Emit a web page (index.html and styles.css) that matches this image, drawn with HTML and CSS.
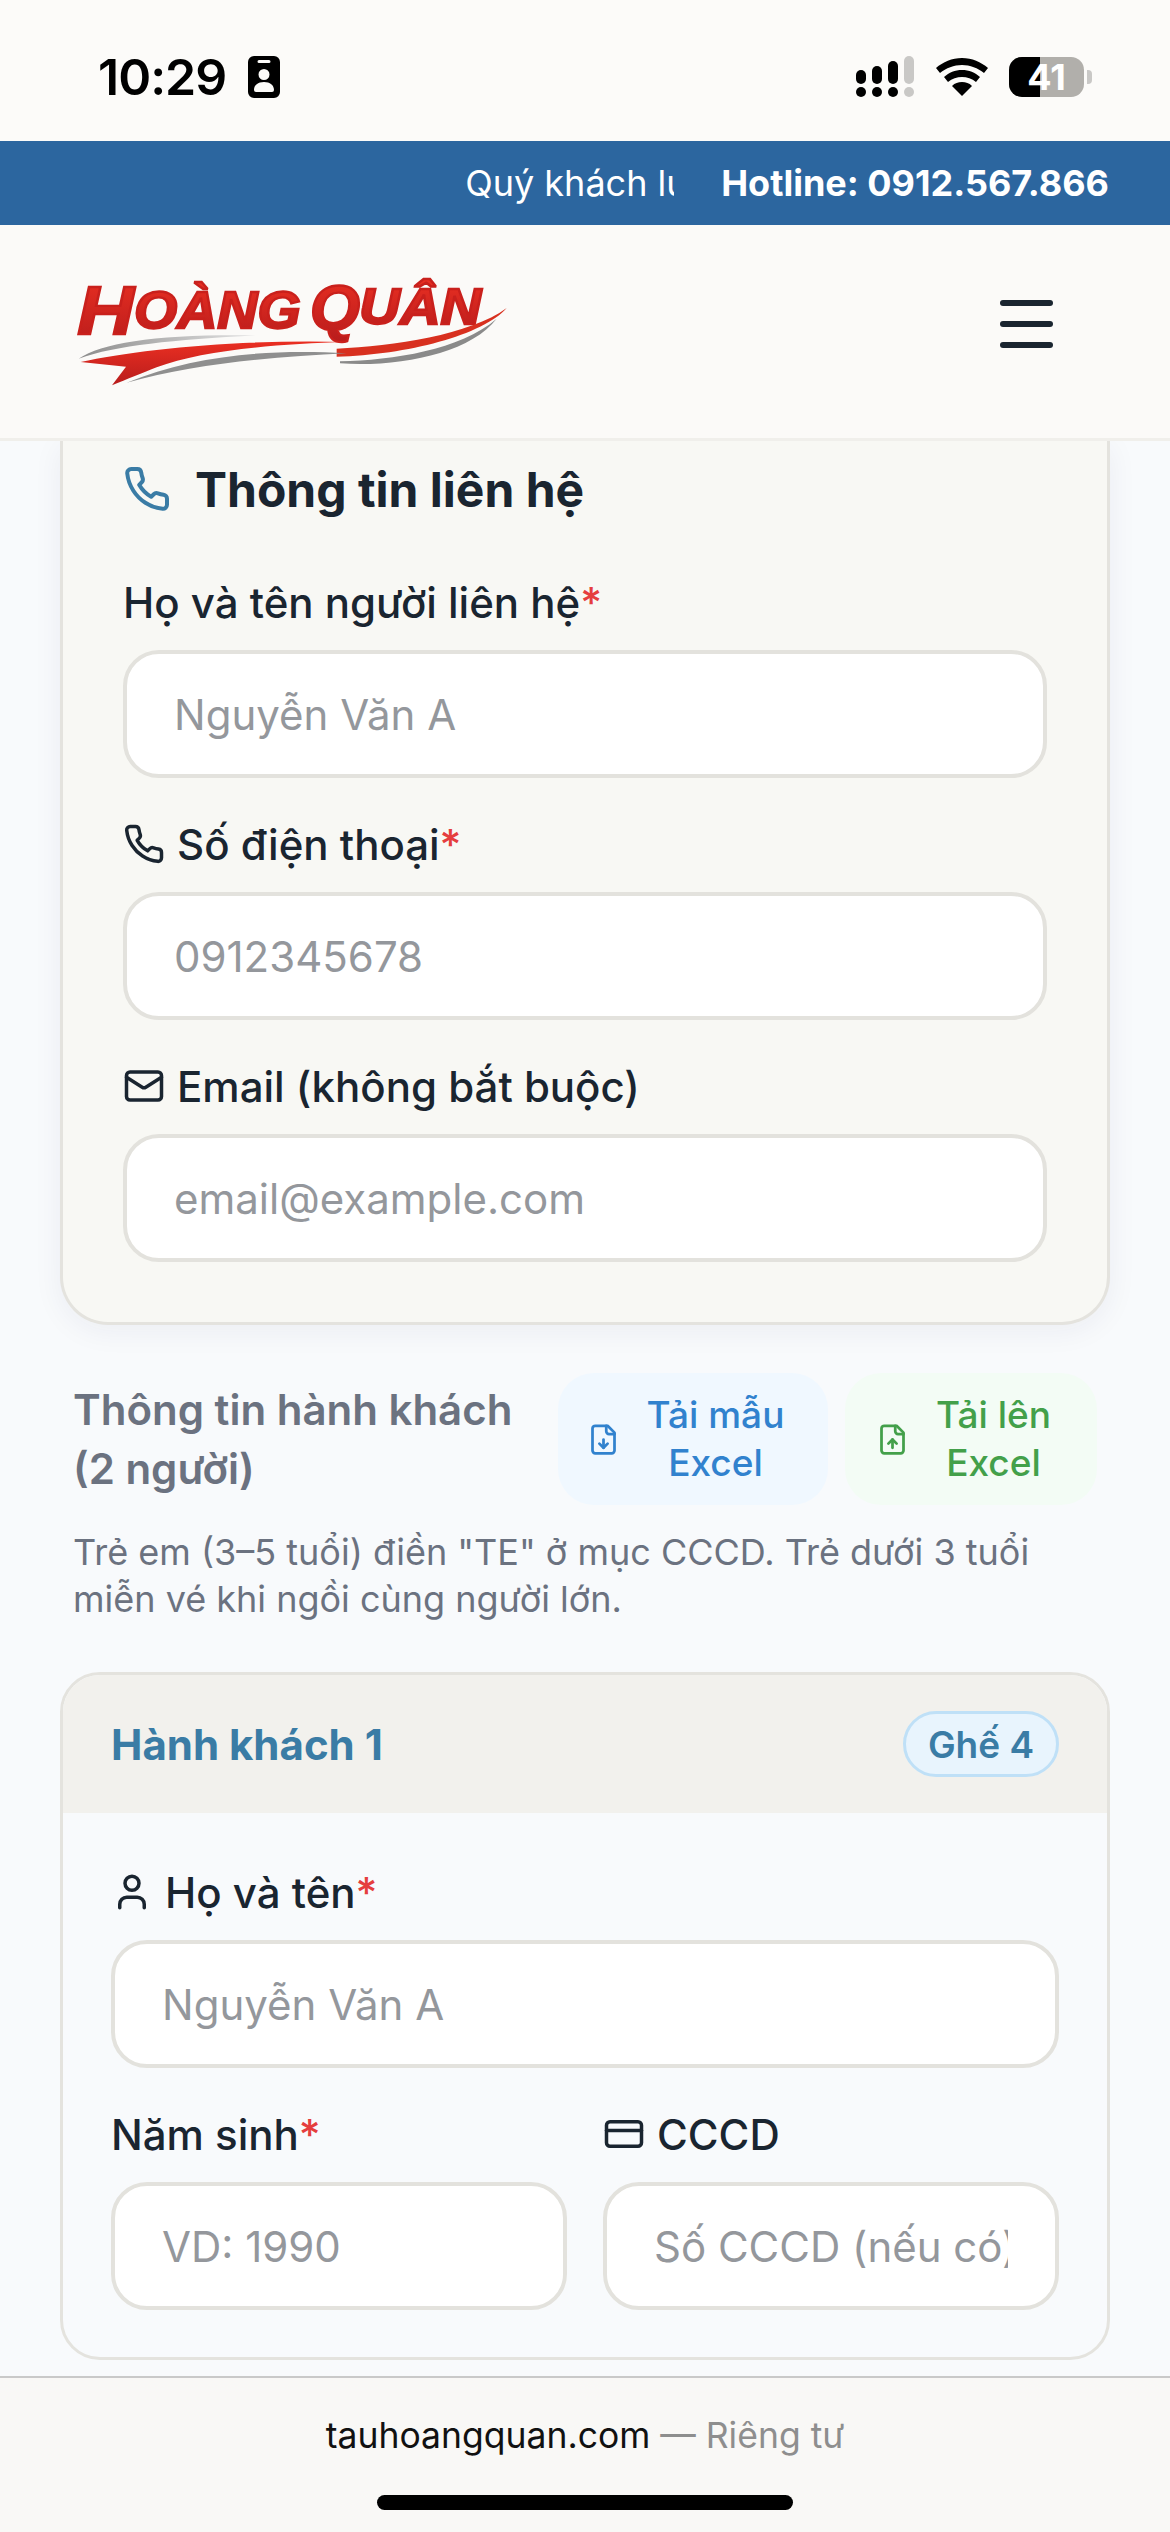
FILE: index.html
```html
<!DOCTYPE html>
<html lang="vi">
<head>
    <meta charset="UTF-8">
    <meta name="viewport" content="width=device-width, initial-scale=1.0">
    <title>Tàu Hoàng Quân</title>
    <link rel="stylesheet" href="styles.css">
</head>
<body>
    <div class="statusbar">
        <div class="status-left">
            <span class="status-time">10:29</span>
            <svg class="status-id" viewBox="0 0 32 42">
                <path fill="#000" fill-rule="evenodd" d="M6 0h20a6 6 0 0 1 6 6v30a6 6 0 0 1-6 6H6a6 6 0 0 1-6-6V6a6 6 0 0 1 6-6zM11 4a1 1 0 0 0 0 3h10a1 1 0 0 0 0-3zM16 13a5.5 5.5 0 1 0 0 11 5.5 5.5 0 0 0 0-11zM16 26c-6 0-10 3-10 8a2 2 0 0 0 2 2h16a2 2 0 0 0 2-2c0-5-4-8-10-8z"/>
            </svg>
        </div>
        <div class="status-right">
            <svg class="status-signal" viewBox="0 0 58 42">
                <rect x="0" y="14" width="10" height="14" rx="5"/>
                <rect x="16" y="10" width="10" height="18" rx="5"/>
                <rect x="32" y="5" width="10" height="23" rx="5"/>
                <rect x="48" y="0" width="10" height="28" rx="5" fill="#c9c8c6"/>
                <rect x="0" y="31" width="10" height="10" rx="5"/>
                <rect x="16" y="31" width="10" height="10" rx="5"/>
                <rect x="32" y="31" width="10" height="10" rx="5"/>
                <rect x="48" y="31" width="10" height="10" rx="5" fill="#c9c8c6"/>
            </svg>
            <svg class="status-wifi" viewBox="0 0 52 38">
                <path fill="#000" d="M26 0c10 0 19 4 26 10l-4 5C42 10 34 7 26 7S10 10 4 15L0 10C7 4 16 0 26 0z"/>
                <path fill="#000" d="M26 12c7 0 13 2.500 18 7l-4 5c-4-3.500-9-5-14-5s-10 1.500-14 5l-4-5c5-4.500 11-7 18-7z"/>
                <path fill="#000" d="M26 24c4 0 7 1 10 4L26 38 16 28c3-3 6-4 10-4z"/>
            </svg>
            <div class="battery">
                <div class="battery-level"></div>
                <span class="battery-text">41</span>
            </div>
            <div class="battery-nub"></div>
        </div>
    </div>

    <div class="topbar">
        <div class="topbar-marquee"><span>Quý khách lưu ý</span></div>
        <div class="topbar-hotline">Hotline: 0912.567.866</div>
    </div>

    <header class="site-header">
        <svg class="logo" viewBox="0 0 1380 390">
            <defs>
                <linearGradient id="logoRed" x1="0" y1="0" x2="0" y2="1">
                    <stop offset="0" stop-color="#ea2f22"/>
                    <stop offset="1" stop-color="#b81c1c"/>
                </linearGradient>
                <linearGradient id="logoGrey" x1="0" y1="0" x2="1" y2="0">
                    <stop offset="0" stop-color="#8c8c8c"/>
                    <stop offset="1" stop-color="#e4e4e4"/>
                </linearGradient>
            </defs>
            <text class="logo-text" x="52" y="222" font-size="205" textLength="170" lengthAdjust="spacingAndGlyphs">H</text>
            <text class="logo-text" x="222" y="205" font-size="158" textLength="500" lengthAdjust="spacingAndGlyphs">OÀNG</text>
            <text class="logo-text" x="750" y="208" font-size="190" textLength="150" lengthAdjust="spacingAndGlyphs">Q</text>
            <text class="logo-text" x="898" y="192" font-size="150" textLength="365" lengthAdjust="spacingAndGlyphs">UÂN</text>
            <path fill="url(#logoGrey)" d="M56 296C130 246 300 222 590 226 340 240 170 256 56 296z"/>
            <path fill="url(#logoRed)" d="M62 306C230 268 560 236 862 246 640 252 420 272 290 322 250 338 200 358 156 376L198 320z"/>
            <path fill="#d8301f" d="M830 266C1000 258 1230 225 1340 144 1270 225 1040 285 830 290z"/>
            <path fill="#8f8f8f" d="M200 368C400 284 640 266 860 280 640 290 400 312 200 368z"/>
            <path fill="#8a8a8a" d="M840 304C1000 300 1200 270 1310 176 1230 280 1020 322 840 310z"/>
        </svg>
        <button class="menu-btn" type="button" aria-label="Menu">
            <span></span><span></span><span></span>
        </button>
    </header>

    <main class="content">
        <section class="contact-card">
            <h2 class="card-title">
                <svg class="title-icon" viewBox="0 0 24 24"><path d="M22 16.920v3a2 2 0 0 1-2.180 2 19.790 19.790 0 0 1-8.630-3.070 19.500 19.500 0 0 1-6-6 19.790 19.790 0 0 1-3.070-8.670A2 2 0 0 1 4.110 2h3a2 2 0 0 1 2 1.720 12.840 12.840 0 0 0 .7 2.810 2 2 0 0 1-.45 2.110L8.090 9.910a16 16 0 0 0 6 6l1.270-1.270a2 2 0 0 1 2.110-.45 12.840 12.840 0 0 0 2.810.7A2 2 0 0 1 22 16.92z"/></svg>
                Thông tin liên hệ
            </h2>
            <div class="field">
                <label class="field-label"><span>Họ và tên người liên hệ<span class="req">*</span></span></label>
                <input class="field-input" type="text" placeholder="Nguyễn Văn A">
            </div>
            <div class="field">
                <label class="field-label">
                    <svg class="label-icon" viewBox="0 0 24 24"><path d="M22 16.920v3a2 2 0 0 1-2.180 2 19.790 19.790 0 0 1-8.630-3.070 19.500 19.500 0 0 1-6-6 19.790 19.790 0 0 1-3.070-8.670A2 2 0 0 1 4.110 2h3a2 2 0 0 1 2 1.720 12.840 12.840 0 0 0 .7 2.810 2 2 0 0 1-.45 2.110L8.090 9.910a16 16 0 0 0 6 6l1.270-1.270a2 2 0 0 1 2.110-.45 12.840 12.840 0 0 0 2.810.7A2 2 0 0 1 22 16.92z"/></svg>
                    <span>Số điện thoại<span class="req">*</span></span>
                </label>
                <input class="field-input" type="text" placeholder="0912345678">
            </div>
            <div class="field">
                <label class="field-label">
                    <svg class="label-icon" viewBox="0 0 24 24"><rect x="2" y="4" width="20" height="16" rx="2"/><path d="m22 7-8.970 5.700a1.940 1.940 0 0 1-2.060 0L2 7"/></svg>
                    <span>Email (không bắt buộc)</span>
                </label>
                <input class="field-input" type="text" placeholder="email@example.com">
            </div>
        </section>

        <div class="passenger-head">
            <h3 class="passenger-title">Thông tin hành khách (2 người)</h3>
            <div class="excel-actions">
                <button class="excel-btn excel-btn-blue" type="button">
                    <svg class="excel-icon" viewBox="0 0 24 24"><path d="M15 2H6a2 2 0 0 0-2 2v16a2 2 0 0 0 2 2h12a2 2 0 0 0 2-2V7Z"/><path d="M14 2v4a2 2 0 0 0 2 2h4"/><path d="M12 18v-6"/><path d="m9 15 3 3 3-3"/></svg>
                    <span>Tải mẫu<br>Excel</span>
                </button>
                <button class="excel-btn excel-btn-green" type="button">
                    <svg class="excel-icon" viewBox="0 0 24 24"><path d="M15 2H6a2 2 0 0 0-2 2v16a2 2 0 0 0 2 2h12a2 2 0 0 0 2-2V7Z"/><path d="M14 2v4a2 2 0 0 0 2 2h4"/><path d="M12 12v6"/><path d="m15 15-3-3-3 3"/></svg>
                    <span>Tải lên<br>Excel</span>
                </button>
            </div>
        </div>
        <p class="passenger-note">Trẻ em (3–5 tuổi) điền "TE" ở mục CCCD. Trẻ dưới 3 tuổi miễn vé khi ngồi cùng người lớn.</p>

        <section class="passenger-card">
            <div class="passenger-card-head">
                <span class="passenger-name">Hành khách 1</span>
                <span class="seat-badge">Ghế 4</span>
            </div>
            <div class="passenger-card-body">
                <div class="field">
                    <label class="field-label">
                        <svg class="label-icon" viewBox="0 0 24 24"><path d="M19 21v-2a4 4 0 0 0-4-4H9a4 4 0 0 0-4 4v2"/><circle cx="12" cy="7" r="4"/></svg>
                        <span>Họ và tên<span class="req">*</span></span>
                    </label>
                    <input class="field-input" type="text" placeholder="Nguyễn Văn A">
                </div>
                <div class="field-row">
                    <div class="field">
                        <label class="field-label"><span>Năm sinh<span class="req">*</span></span></label>
                        <input class="field-input" type="text" placeholder="VD: 1990">
                    </div>
                    <div class="field">
                        <label class="field-label">
                            <svg class="label-icon" viewBox="0 0 24 24"><rect x="2" y="5" width="20" height="14" rx="2"/><line x1="2" y1="10" x2="22" y2="10"/></svg>
                            <span>CCCD</span>
                        </label>
                        <input class="field-input" type="text" placeholder="Số CCCD (nếu có)">
                    </div>
                </div>
            </div>
        </section>
    </main>

    <footer class="browser-bar">
        <div class="browser-url">tauhoangquan.com <span class="browser-private">— Riêng tư</span></div>
        <div class="home-indicator"></div>
    </footer>
</body>
</html>
```

FILE: styles.css
```css
* {
    box-sizing: border-box;
}
html, body {
    margin: 0;
    padding: 0;
}
body {
    width: 1170px;
    height: 2532px;
    overflow: hidden;
    display: flex;
    flex-direction: column;
    font-family: Inter, "Noto Sans", sans-serif;
    color: #1a2530;
    background-color: #f8fafc;
}

/* status bar */
.statusbar {
    height: 141px;
    flex: none;
    display: flex;
    justify-content: space-between;
    background-color: #fcfbf9;
    padding: 56px 78px 0 98px;
}
.status-left {
    display: flex;
    align-items: flex-start;
    gap: 22px;
}
.status-time {
    font-size: 50px;
    line-height: 42px;
    font-weight: 600;
    color: #000;
    letter-spacing: -1px;
}
.status-id {
    width: 32px;
    height: 42px;
}
.status-right {
    display: flex;
    align-items: flex-start;
}
.status-signal {
    width: 58px;
    height: 42px;
    margin-right: 22px;
}
.status-wifi {
    width: 52px;
    height: 38px;
    margin-right: 21px;
    margin-top: 2px;
}
.battery {
    width: 75px;
    height: 40px;
    margin-top: 1px;
    border-radius: 13px;
    background-color: #b1afab;
    display: flex;
    align-items: center;
    justify-content: center;
    position: relative;
}
.battery-level {
    position: absolute;
    left: 0;
    top: 0;
    bottom: 0;
    width: 31px;
    border-radius: 13px 0 0 13px;
    background-color: #000;
}
.battery-text {
    position: relative;
    font-size: 36px;
    line-height: 40px;
    font-weight: 700;
    color: #fff;
}
.battery-nub {
    width: 5px;
    height: 14px;
    margin: 14px 0 0 3px;
    border-radius: 0 4px 4px 0;
    background-color: #c9c8c6;
}

/* blue hotline bar */
.topbar {
    height: 84px;
    flex: none;
    display: flex;
    align-items: center;
    justify-content: flex-end;
    gap: 47px;
    padding-right: 61px;
    background-color: #2c669f;
    color: #fff;
    font-size: 36px;
}
.topbar-marquee {
    width: 209px;
    overflow: hidden;
    white-space: nowrap;
}
.topbar-hotline {
    font-size: 36px;
    font-weight: 700;
    white-space: nowrap;
}

/* header */
.site-header {
    height: 216px;
    flex: none;
    display: flex;
    align-items: center;
    justify-content: space-between;
    padding: 0 117px 0 60px;
    background-color: #fbfaf8;
    border-bottom: 3px solid #f0efeb;
    position: relative;
}
.logo {
    width: 460px;
    height: 130px;
    margin-top: -13px;
}
.logo-text {
    font-family: "Liberation Sans", sans-serif;
    font-weight: 700;
    font-style: italic;
    fill: url(#logoRed);
    stroke: #c9201c;
    stroke-width: 7px;
}
.menu-btn {
    width: 53px;
    height: 48px;
    margin-top: -15px;
    padding: 0;
    border: none;
    background: none;
    display: flex;
    flex-direction: column;
    justify-content: space-between;
}
.menu-btn span {
    display: block;
    height: 6px;
    border-radius: 3px;
    background-color: #1a2530;
}

/* form */
.content {
    flex: 1;
    overflow: hidden;
    padding: 0 60px;
}
.contact-card {
    background-color: #f8f8f4;
    border: 3px solid #e4e3de;
    border-top: none;
    border-radius: 0 0 48px 48px;
    padding: 21px 60px 60px;
    box-shadow: 0 6px 30px rgba(30,40,80,0.06);
}
.card-title {
    display: flex;
    align-items: center;
    gap: 24px;
    height: 54px;
    margin: 0 0 61px;
    font-size: 48px;
    font-weight: 700;
    color: #1a2530;
}
.title-icon {
    width: 48px;
    height: 48px;
    flex: none;
    fill: none;
    stroke: #3a7ca5;
    stroke-width: 2;
    stroke-linecap: round;
    stroke-linejoin: round;
}
.field + .field {
    margin-top: 41px;
}
.field-label {
    display: flex;
    align-items: center;
    gap: 12px;
    height: 50px;
    margin-bottom: 23px;
    font-size: 42px;
    font-weight: 500;
    color: #1a2530;
    white-space: nowrap;
}
.label-icon {
    width: 42px;
    height: 42px;
    flex: none;
    fill: none;
    stroke: #1a2530;
    stroke-width: 2;
    stroke-linecap: round;
    stroke-linejoin: round;
}
.req {
    color: #e53e3e;
}
.field-input {
    display: block;
    width: 100%;
    height: 128px;
    padding: 0 47px;
    border: 4px solid #e3e2dd;
    border-radius: 36px;
    background-color: #fff;
    font-family: Inter, "Noto Sans", sans-serif;
    font-size: 42px;
    color: #1a2530;
}
.field-input::placeholder {
    color: #94979c;
    opacity: 1;
}

.passenger-head {
    display: flex;
    align-items: center;
    justify-content: space-between;
    height: 132px;
    margin-top: 48px;
    padding: 0 13px;
}
.passenger-title {
    width: 470px;
    margin: 0;
    font-size: 42px;
    line-height: 59px;
    font-weight: 600;
    color: #6b7280;
}
.excel-actions {
    display: flex;
    gap: 17px;
}
.excel-btn {
    display: flex;
    align-items: center;
    justify-content: center;
    gap: 27px;
    height: 132px;
    padding: 0 15px 0 0;
    border: none;
    border-radius: 36px;
    font-family: Inter, "Noto Sans", sans-serif;
    font-size: 37px;
    line-height: 48px;
    font-weight: 500;
    text-align: center;
}
.excel-icon {
    width: 33px;
    height: 33px;
    flex: none;
    fill: none;
    stroke: currentColor;
    stroke-width: 2;
    stroke-linecap: round;
    stroke-linejoin: round;
}
.excel-btn-blue {
    width: 270px;
    background-color: #f0f8ff;
    color: #3182ce;
}
.excel-btn-green {
    width: 252px;
    background-color: #f3fcf5;
    color: #43a04a;
}
.passenger-note {
    margin: 24px 13px 0;
    font-size: 36px;
    line-height: 47px;
    color: #6b7280;
}

.passenger-card {
    margin-top: 49px;
    border: 3px solid #e4e3de;
    border-radius: 40px;
    overflow: hidden;
}
.passenger-card-head {
    display: flex;
    align-items: center;
    justify-content: space-between;
    height: 138px;
    padding: 0 48px;
    background-color: #f2f1ed;
}
.passenger-name {
    font-size: 42px;
    font-weight: 700;
    color: #3a7ca5;
}
.seat-badge {
    height: 66px;
    width: 156px;
    display: flex;
    align-items: center;
    justify-content: center;
    border: 3px solid #bfe0f7;
    border-radius: 33px;
    background-color: #e8f4fd;
    font-size: 37px;
    font-weight: 600;
    color: #3a7ca5;
}
.passenger-card-body {
    padding: 54px 48px 47px;
}
.field-row {
    display: grid;
    grid-template-columns: 1fr 1fr;
    gap: 36px;
    margin-top: 41px;
}
.field-row .field + .field {
    margin-top: 0;
}

/* safari bottom bar */
.browser-bar {
    height: 156px;
    flex: none;
    display: flex;
    flex-direction: column;
    align-items: center;
    padding-top: 36px;
    background-color: #f9f8f6;
    border-top: 2px solid #c9c9c9;
}
.browser-url {
    height: 44px;
    font-size: 35.5px;
    line-height: 44px;
    color: #111;
}
.browser-private {
    color: #8e8e8e;
}
.home-indicator {
    width: 416px;
    height: 15px;
    margin-top: 37px;
    border-radius: 8px;
    background-color: #000;
}
```
